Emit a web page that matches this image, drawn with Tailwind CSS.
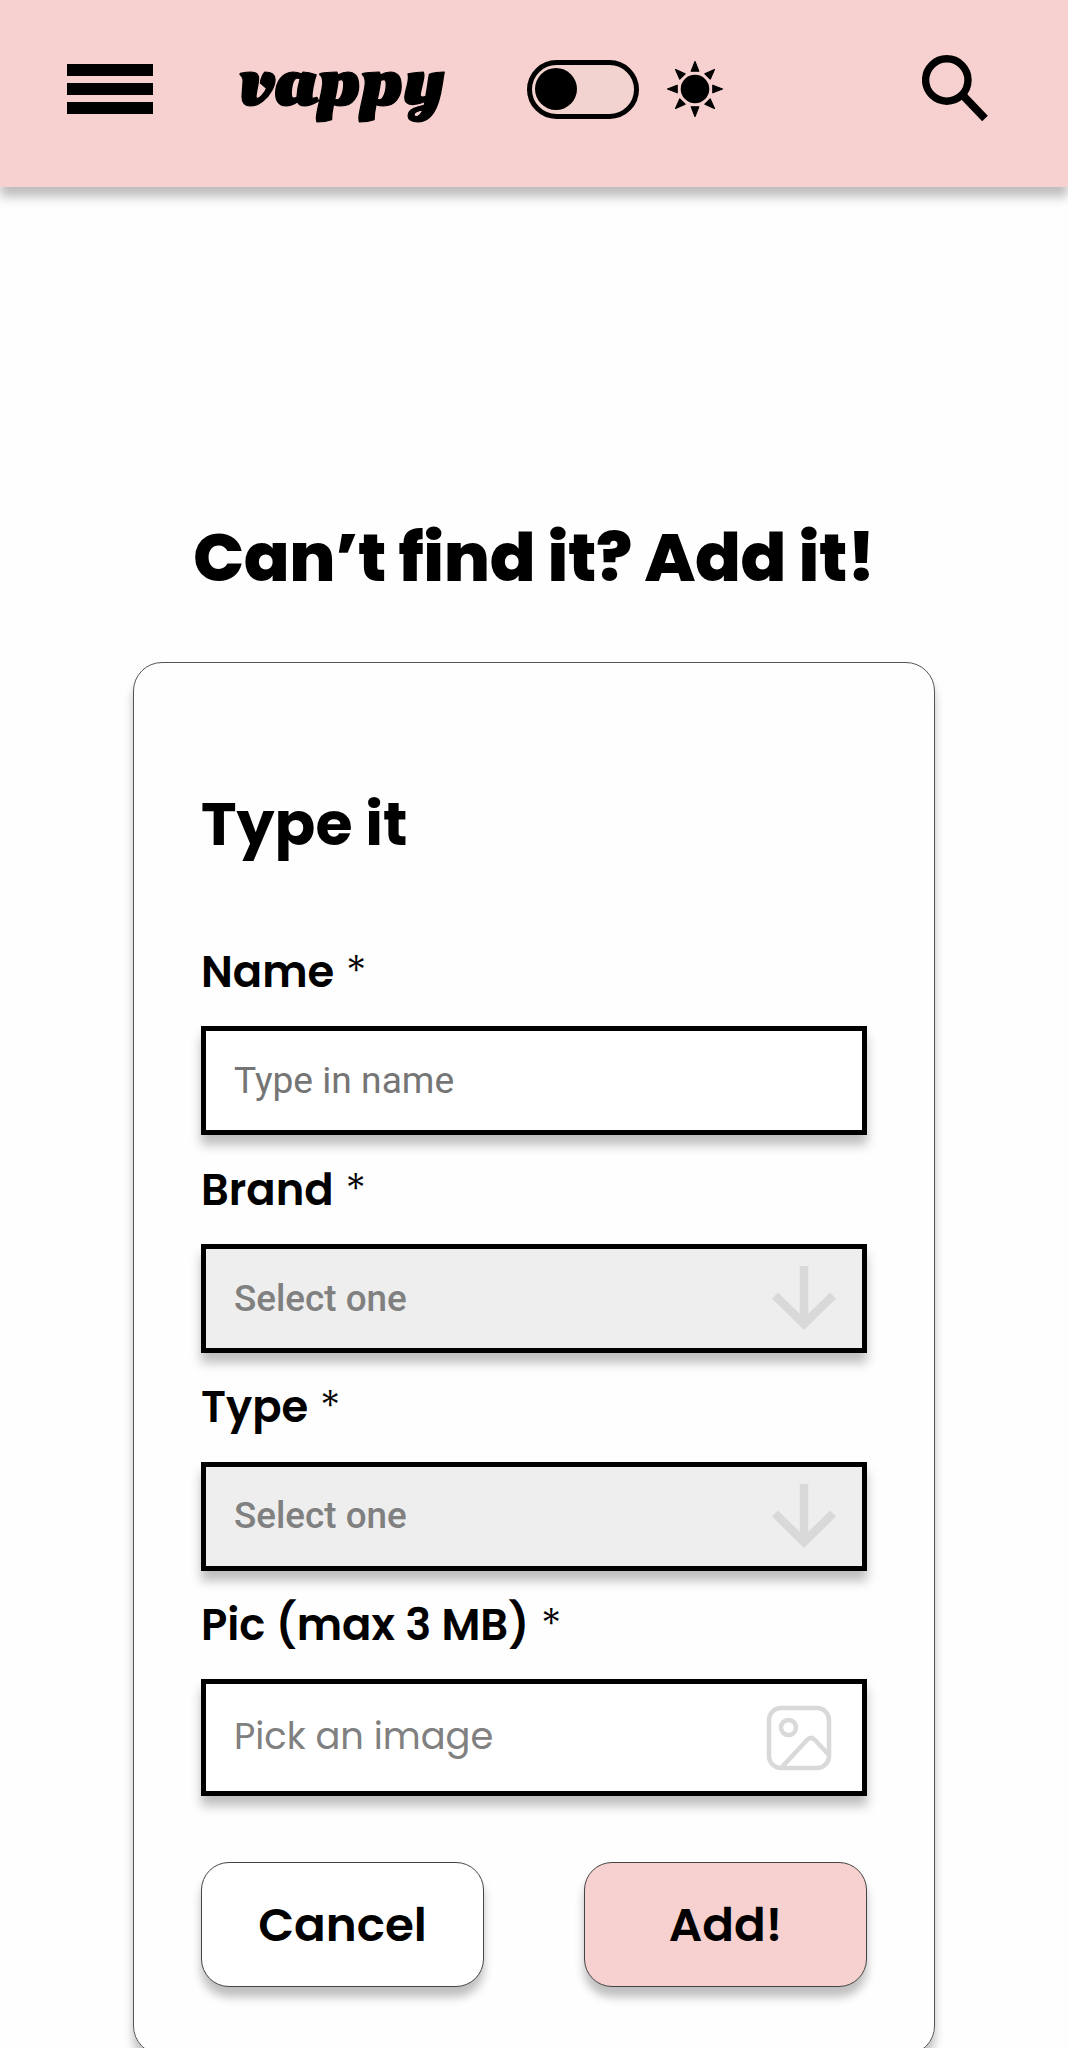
<!DOCTYPE html>
<html lang="en">
<head>
  <meta charset="UTF-8" />
  <title>vappy</title>
  <script src="https://cdn.jsdelivr.net/npm/@tailwindcss/browser@4"></script>
</head>
<body class="h-screen overflow-hidden bg-[#fefefe] text-black font-['Poppins','Inter',sans-serif] whitespace-nowrap">

  <!-- Header -->
  <header class="flex items-center h-[187px] pb-[9px] pl-[67px] pr-[78px] bg-[#f7d1cf] shadow-[0_10px_10px_rgba(0,0,0,0.25)]">
    <button class="flex flex-col gap-[7px] w-[86px]">
      <span class="h-3 w-full bg-black"></span>
      <span class="h-3 w-full bg-black"></span>
      <span class="h-3 w-full bg-black"></span>
    </button>
    <svg class="ml-[71px] w-[236px] h-[120px]" viewBox="0 0 236 120">
      <text x="14" y="75.5" textLength="206" lengthAdjust="spacingAndGlyphs" class="font-['Oleo_Script','Lobster',serif] font-bold text-[74px]" stroke="#000" stroke-width="1.2" stroke-linejoin="round">vappy</text>
    </svg>
    <div class="ml-[67px] flex items-center w-[112px] h-[59px] rounded-full border-[5px] border-black bg-[#f3d3cf] pl-[3px]">
      <span class="size-[42px] rounded-full bg-black"></span>
    </div>
    <svg class="ml-[27px] size-[58px]" viewBox="-29 -29 58 58">
      <circle r="14.3" />
      <g stroke="#000" stroke-width="1.2" stroke-linejoin="round">
        <path d="M0-27.5L3.8-17.8H-3.8Z" />
        <path d="M0-27.5L3.8-17.8H-3.8Z" transform="rotate(45)" />
        <path d="M0-27.5L3.8-17.8H-3.8Z" transform="rotate(90)" />
        <path d="M0-27.5L3.8-17.8H-3.8Z" transform="rotate(135)" />
        <path d="M0-27.5L3.8-17.8H-3.8Z" transform="rotate(180)" />
        <path d="M0-27.5L3.8-17.8H-3.8Z" transform="rotate(225)" />
        <path d="M0-27.5L3.8-17.8H-3.8Z" transform="rotate(270)" />
        <path d="M0-27.5L3.8-17.8H-3.8Z" transform="rotate(315)" />
      </g>
    </svg>
    <svg class="ml-auto w-[68px] h-[70px]" viewBox="0 0 68 70" fill="none" stroke="#000">
      <circle cx="24.8" cy="26" r="21.2" stroke-width="7.4" />
      <path d="M41.5 42L63 64.500" stroke-width="7.8" />
      <path d="M39.500 44L45.500 41" stroke-width="5" />
    </svg>
  </header>

  <main class="flex flex-col items-center">
    <h1 class="mt-[331px] h-20 leading-[80px] text-[67.5px] font-extrabold tracking-[-0.4px]">Can’t find it? Add it!</h1>

    <!-- Form card -->
    <form class="mt-[64px] w-[802px] h-[1393px] px-[67px] pt-[126px] rounded-[29px] border border-[#555] shadow-[0_10px_10px_rgba(0,0,0,0.25)]">
      <h2 class="h-[70px] leading-[70px] text-[60.2px] font-bold mb-[88px]">Type it</h2>

      <div class="mb-[29.2px]">
        <label class="block h-[50px] leading-[50px] text-[43.3px] font-semibold mb-[29.4px]">Name <span class="ml-[1.5px] font-light">*</span></label>
        <div class="flex items-center h-[109px] pl-[28px] border-[5px] border-black bg-white shadow-[0_10px_10px_rgba(0,0,0,0.25)] font-['Roboto',sans-serif] text-[37.2px] text-[#757575]">Type in name</div>
      </div>

      <div class="mb-[29.2px]">
        <label class="block h-[50px] leading-[50px] text-[43.3px] font-semibold mb-[29.4px]">Brand <span class="ml-[1.5px] font-light">*</span></label>
        <div class="flex items-center justify-between h-[109px] pl-[28px] pr-[26px] border-[5px] border-black bg-[#eee] shadow-[0_10px_10px_rgba(0,0,0,0.25)] font-['Roboto',sans-serif] text-[36.8px] font-medium text-[#808080]">
          Select one
          <svg class="w-[64px] h-[66px]" viewBox="0 0 64 66" fill="none" stroke="#d9d9d9" stroke-width="8.5"><path d="M32 1V60M3 30.5L32 59L61 30.5" /></svg>
        </div>
      </div>

      <div class="mb-[29.2px]">
        <label class="block h-[50px] leading-[50px] text-[43.3px] font-semibold mb-[29.4px]">Type <span class="ml-[1.5px] font-light">*</span></label>
        <div class="flex items-center justify-between h-[109px] pl-[28px] pr-[26px] border-[5px] border-black bg-[#eee] shadow-[0_10px_10px_rgba(0,0,0,0.25)] font-['Roboto',sans-serif] text-[36.8px] font-medium text-[#808080]">
          Select one
          <svg class="w-[64px] h-[66px]" viewBox="0 0 64 66" fill="none" stroke="#d9d9d9" stroke-width="8.5"><path d="M32 1V60M3 30.5L32 59L61 30.5" /></svg>
        </div>
      </div>

      <div class="mb-[66px]">
        <label class="block h-[50px] leading-[50px] text-[43.3px] font-semibold mb-[29.4px]">Pic (max 3 MB) <span class="ml-[1.5px] font-light">*</span></label>
        <div class="flex items-center justify-between h-[117px] pl-[28px] pr-[30.5px] border-[5px] border-black bg-white shadow-[0_10px_10px_rgba(0,0,0,0.25)] text-[36.8px] text-[#808080]">
          <span class="pb-[1.5px]">Pick an image</span>
          <svg class="size-[66px]" viewBox="0 0 66 66" fill="none" stroke="#d9d9d9" stroke-width="4.5">
            <rect x="3" y="3" width="60" height="60" rx="12" />
            <circle cx="22.5" cy="22.5" r="7.5" />
            <path d="M16 62L41 35Q45 31 49 35L62 49" />
          </svg>
        </div>
      </div>

      <!-- Actions -->
      <div class="flex justify-between">
        <button type="button" class="w-[283px] h-[125px] rounded-[28px] border border-[#444] bg-white shadow-[0_10px_10px_rgba(0,0,0,0.25)] text-[46.8px] font-semibold">Cancel</button>
        <button type="button" class="w-[283px] h-[125px] rounded-[28px] border border-[#444] bg-[#f7d1cf] shadow-[0_10px_10px_rgba(0,0,0,0.25)] text-[46.8px] font-semibold">Add!</button>
      </div>
    </form>
  </main>

</body>
</html>
